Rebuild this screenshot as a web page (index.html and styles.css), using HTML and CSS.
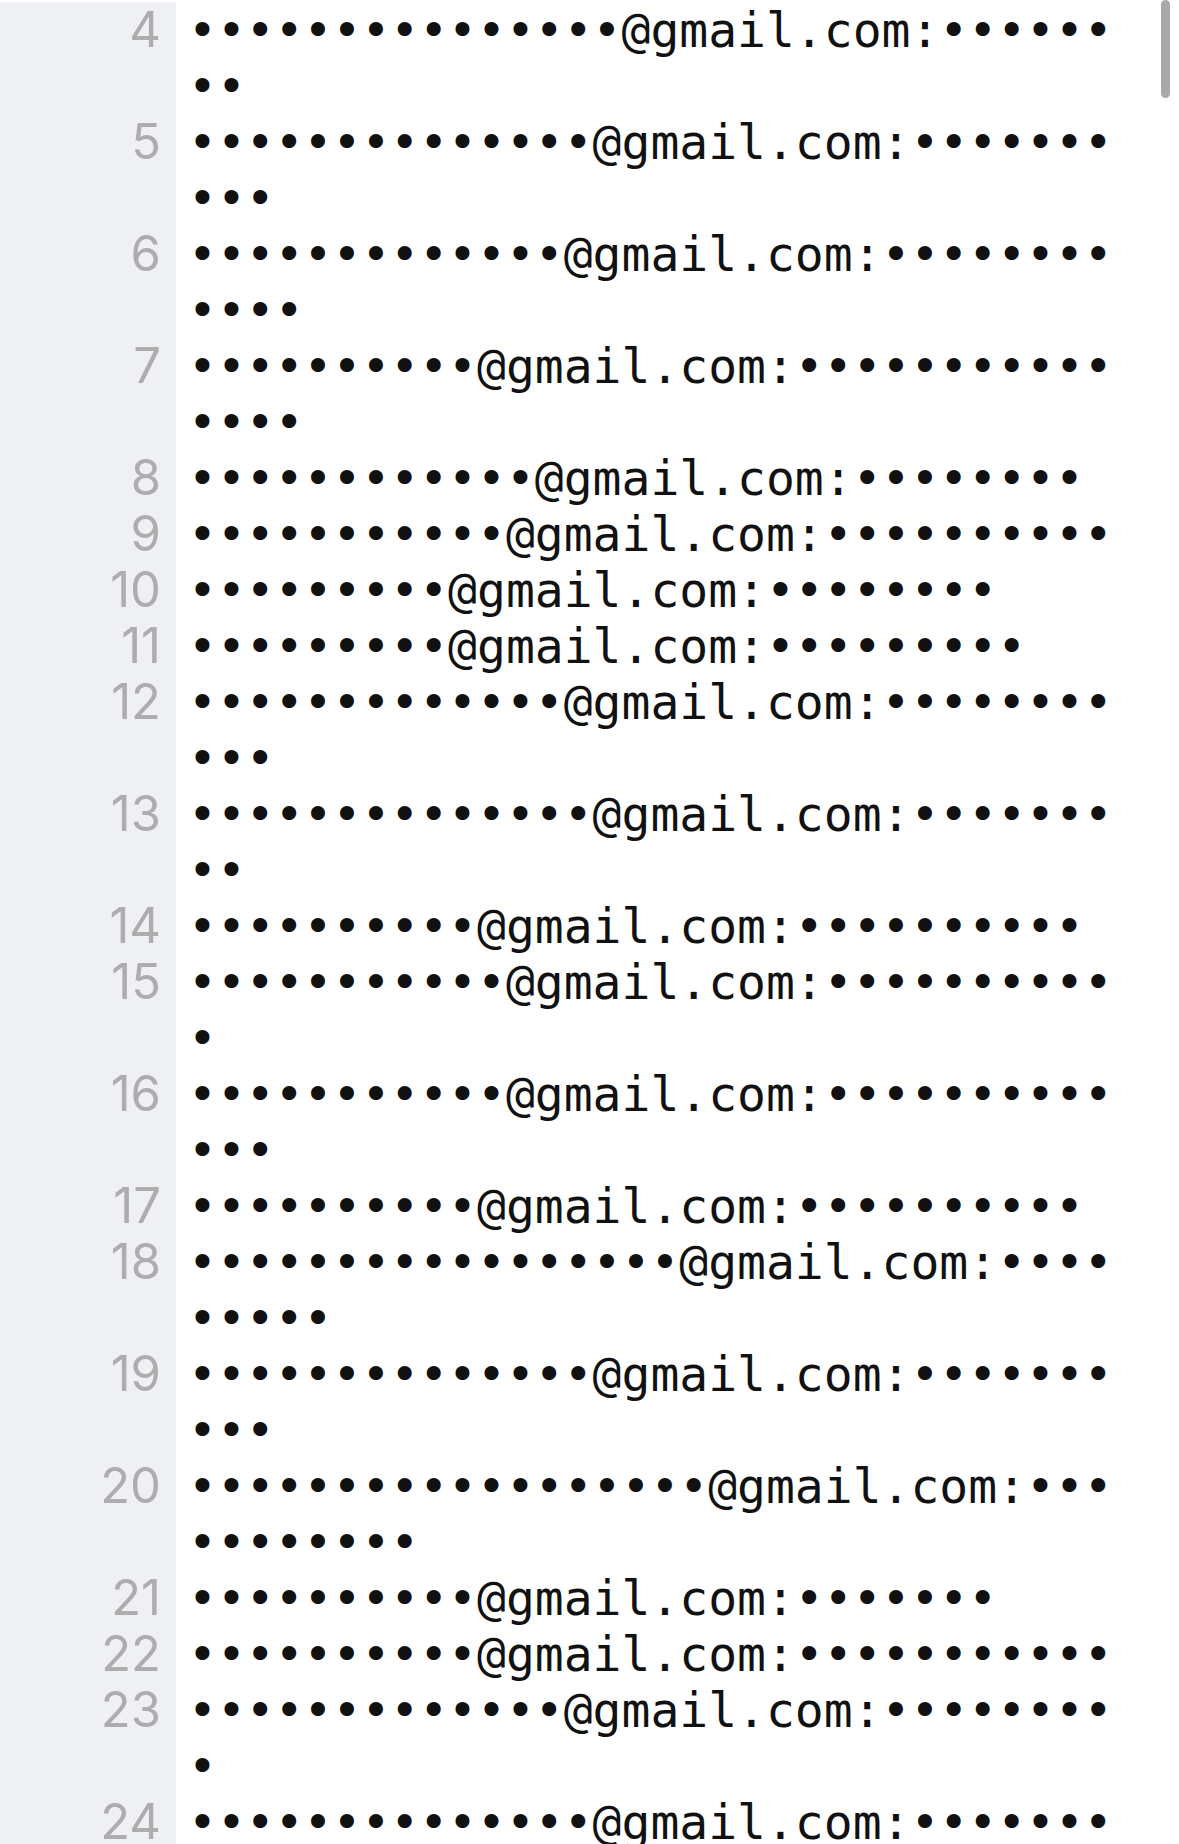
FILE: index.html
```html
<!DOCTYPE html>
<html>
<head>
<meta charset="utf-8">
<link rel="stylesheet" href="styles.css">
</head>
<body>
<div class="editor">
  <div class="row"><div class="num">4</div><div class="code">•••••••••••••••@gmail.com:••••••••</div></div>
  <div class="row"><div class="num">5</div><div class="code">••••••••••••••@gmail.com:••••••••••</div></div>
  <div class="row"><div class="num">6</div><div class="code">•••••••••••••@gmail.com:••••••••••••</div></div>
  <div class="row"><div class="num">7</div><div class="code">••••••••••@gmail.com:•••••••••••••••</div></div>
  <div class="row"><div class="num">8</div><div class="code">••••••••••••@gmail.com:••••••••</div></div>
  <div class="row"><div class="num">9</div><div class="code">•••••••••••@gmail.com:••••••••••</div></div>
  <div class="row"><div class="num">10</div><div class="code">•••••••••@gmail.com:••••••••</div></div>
  <div class="row"><div class="num">11</div><div class="code">•••••••••@gmail.com:•••••••••</div></div>
  <div class="row"><div class="num">12</div><div class="code">•••••••••••••@gmail.com:•••••••••••</div></div>
  <div class="row"><div class="num">13</div><div class="code">••••••••••••••@gmail.com:•••••••••</div></div>
  <div class="row"><div class="num">14</div><div class="code">••••••••••@gmail.com:••••••••••</div></div>
  <div class="row"><div class="num">15</div><div class="code">•••••••••••@gmail.com:•••••••••••</div></div>
  <div class="row"><div class="num">16</div><div class="code">•••••••••••@gmail.com:•••••••••••••</div></div>
  <div class="row"><div class="num">17</div><div class="code">••••••••••@gmail.com:••••••••••</div></div>
  <div class="row"><div class="num">18</div><div class="code">•••••••••••••••••@gmail.com:•••••••••</div></div>
  <div class="row"><div class="num">19</div><div class="code">••••••••••••••@gmail.com:••••••••••</div></div>
  <div class="row"><div class="num">20</div><div class="code">••••••••••••••••••@gmail.com:•••••••••••</div></div>
  <div class="row"><div class="num">21</div><div class="code">••••••••••@gmail.com:•••••••</div></div>
  <div class="row"><div class="num">22</div><div class="code">••••••••••@gmail.com:•••••••••••</div></div>
  <div class="row"><div class="num">23</div><div class="code">•••••••••••••@gmail.com:•••••••••</div></div>
  <div class="row"><div class="num">24</div><div class="code">••••••••••••••@gmail.com:•••••••</div></div>
</div>
<div class="scrollbar"></div>
</body>
</html>
```

FILE: styles.css
```css
html, body {
  margin: 0;
  padding: 0;
  background: #ffffff;
  height: 1844px;
  overflow: hidden;
}

.editor {
  display: flex;
  flex-direction: column;
  padding-top: 2px;
}

.row {
  display: grid;
  grid-template-columns: 176px 1fr;
}

.num {
  background: #eff0f4;
  color: #adadad;
  font-family: Inter, "Noto Sans", sans-serif;
  font-size: 49px;
  line-height: 56px;
  text-align: right;
  padding-right: 15px;
}

.code {
  font-family: "DejaVu Sans Mono", monospace;
  font-size: 48px;
  line-height: 56px;
  color: #111111;
  padding-left: 12px;
  width: 32ch;
  word-break: break-all;
  white-space: pre-wrap;
}

.scrollbar {
  position: absolute;
  top: 0;
  left: 1161px;
  width: 9px;
  height: 98px;
  border-radius: 5px;
  background: #a8a8a8;
}
```
